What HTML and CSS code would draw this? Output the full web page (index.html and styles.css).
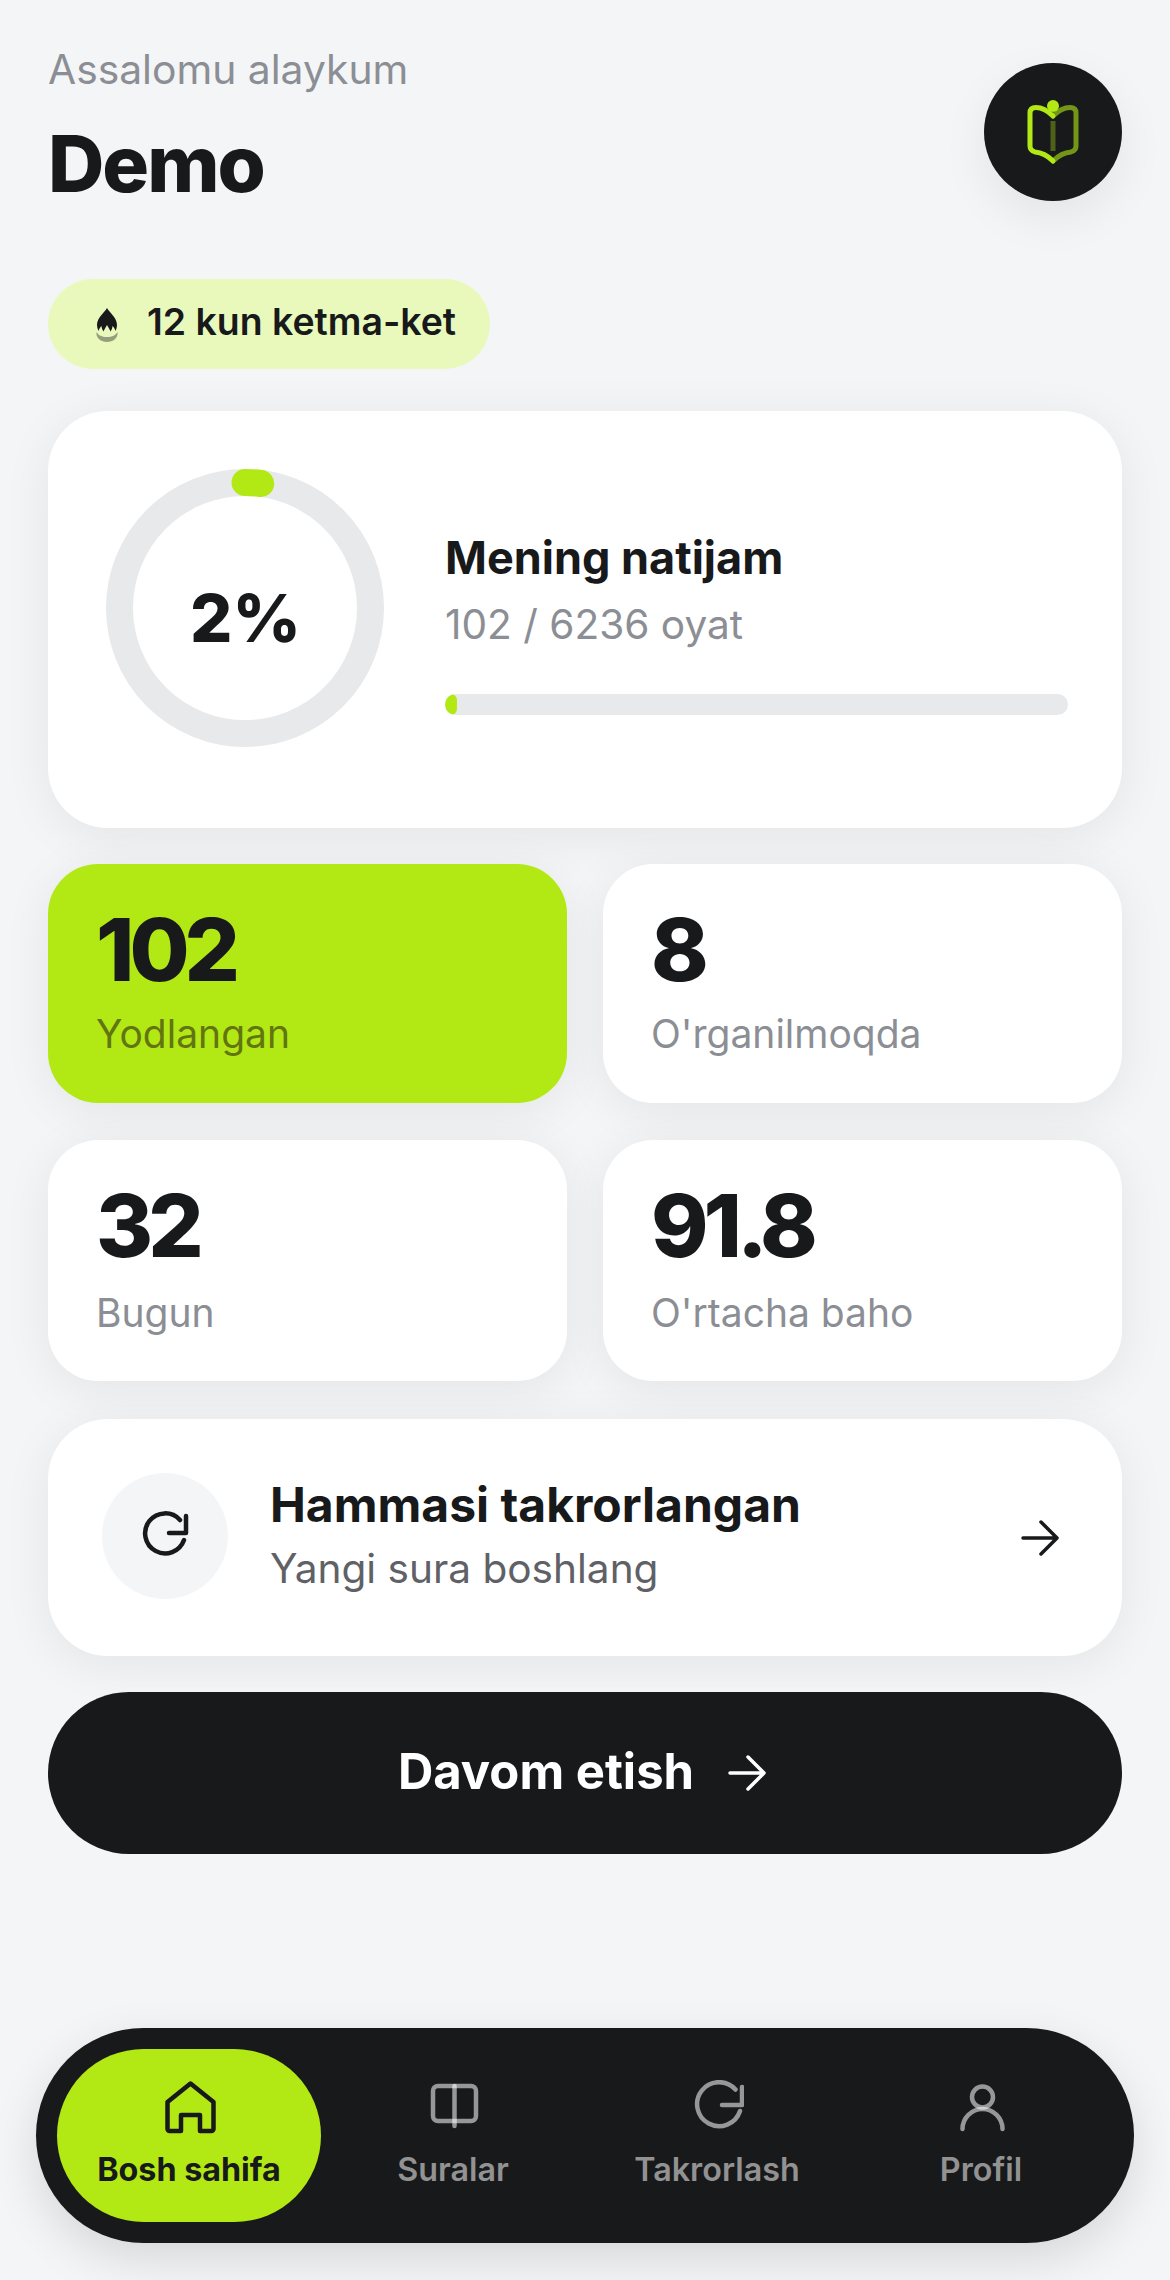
FILE: index.html
```html
<!DOCTYPE html>
<html lang="uz">
<head>
  <meta charset="UTF-8" />
  <title>Bosh sahifa</title>
  <link rel="stylesheet" href="styles.css">
</head>
<body>
  <main class="app">
    <header class="top">
      <div class="hello">
        <p class="hello-small">Assalomu alaykum</p>
        <h1 class="hello-name">Demo</h1>
      </div>
      <div class="logo">
        <svg width="52" height="66" viewBox="0 0 52 66" fill="none" stroke-width="5" stroke-linecap="round" stroke-linejoin="round">
          <path d="M26 52V22" stroke="#b2e915" stroke-opacity=".35" stroke-linecap="butt"/>
          <path d="M26 17C21 12 15 8.500 9 8.500C5 8.500 3 10.500 3 14V47C3 50 5 52 8 53C15 53.500 21 57 26 62" stroke="#b2e915"/>
          <path d="M26 17C31 12 37 8.500 43 8.500C47 8.500 49 10.500 49 14V47C49 50 47 52 44 53C37 53.500 31 57 26 62" stroke="#b2e915" stroke-opacity=".6"/>
          <circle cx="26" cy="7" r="6" fill="#b2e915"/>
        </svg>
      </div>
    </header>

    <div class="streak">
      <svg width="24" height="36" viewBox="0 0 24 36">
        <path d="M12 1C15 6 22 11 22 18C22 20 21.500 22 20.500 24C19.500 21 18.500 20 17.500 19C17.500 21 16.500 23 15.500 24.500C14.500 22 13 20 12 18C11 20 9.500 22 8.500 24.500C7.500 23 6.500 21 6.500 19C5.500 20 4.500 21 3.500 24C2.500 22 2 20 2 18C2 11 9 6 12 1Z" fill="#18191b"/>
        <path d="M1.500 25C3 28 7 30 12 30C17 30 21 28 22.500 25C23.500 31 18 35 12 35C6 35 .5 31 1.500 25Z" fill="#18191b" fill-opacity=".4"/>
      </svg>
      <span class="streak-text">12 kun ketma-ket</span>
    </div>

    <section class="card hero">
      <div class="ring">
        <svg width="278" height="278" viewBox="0 0 278 278" fill="none" stroke-width="27">
          <circle cx="139" cy="139" r="125.500" stroke="#e8e9eb"/>
          <circle cx="139" cy="139" r="125.500" stroke="#b2e915" stroke-linecap="round" stroke-dasharray="15.800 800" transform="rotate(-90 139 139)"/>
        </svg>
        <span class="ring-label">2%</span>
      </div>
      <div class="hero-info">
        <h2 class="hero-title">Mening natijam</h2>
        <p class="hero-sub">102 / 6236 oyat</p>
        <div class="bar"><div class="bar-fill" style="width: 2%"></div></div>
      </div>
    </section>

    <section class="stats">
      <div class="card stat stat-lime">
        <div class="stat-num">102</div>
        <div class="stat-label">Yodlangan</div>
      </div>
      <div class="card stat">
        <div class="stat-num">8</div>
        <div class="stat-label">O'rganilmoqda</div>
      </div>
      <div class="card stat stat-low">
        <div class="stat-num">32</div>
        <div class="stat-label">Bugun</div>
      </div>
      <div class="card stat stat-low">
        <div class="stat-num">91.8</div>
        <div class="stat-label">O'rtacha baho</div>
      </div>
    </section>

    <section class="card review">
      <div class="review-icon">
        <svg width="54" height="54" viewBox="0 0 54 54" fill="none" stroke="#18191b" stroke-width="4.500" stroke-linecap="round" stroke-linejoin="round">
          <path d="M42 14A20 20 0 1 0 46 34"/>
          <path d="M48 10V27H31"/>
        </svg>
      </div>
      <div class="review-text">
        <h3 class="review-title">Hammasi takrorlangan</h3>
        <p class="review-sub">Yangi sura boshlang</p>
      </div>
      <svg class="arrow" width="38" height="38" viewBox="0 0 38 38" fill="none" stroke="#18191b" stroke-width="3.500" stroke-linecap="round" stroke-linejoin="round">
        <path d="M2 19H36M20 3L36 19L20 35"/>
      </svg>
    </section>

    <button class="cta">
      <span>Davom etish</span>
      <svg width="38" height="38" viewBox="0 0 38 38" fill="none" stroke="#fff" stroke-width="3.500" stroke-linecap="round" stroke-linejoin="round">
        <path d="M2 19H36M20 3L36 19L20 35"/>
      </svg>
    </button>

    <nav class="nav">
      <a class="nav-item active">
        <svg width="54" height="54" viewBox="0 0 54 54" fill="none" stroke="#18191b" stroke-width="4.500" stroke-linecap="round" stroke-linejoin="round">
          <path d="M28.500 3.500L5.500 22V49C5.500 50 6.500 51 7.500 51H19V35H38V51H49.500C50.500 51 51.500 50 51.500 49V22Z"/>
        </svg>
        <span>Bosh sahifa</span>
      </a>
      <a class="nav-item">
        <svg width="54" height="54" viewBox="0 0 54 54" fill="none" stroke="#fff" stroke-opacity=".55" stroke-width="4.500" stroke-linecap="round" stroke-linejoin="round">
          <rect x="7" y="6" width="43" height="35" rx="5"/>
          <path d="M28.500 6V46"/>
        </svg>
        <span>Suralar</span>
      </a>
      <a class="nav-item">
        <svg width="54" height="54" viewBox="0 0 54 54" fill="none" stroke="#fff" stroke-opacity=".55" stroke-width="4.500" stroke-linecap="round" stroke-linejoin="round">
          <path d="M45.500 9.500A22 22 0 1 0 50 31"/>
          <path d="M52 7V25H32"/>
        </svg>
        <span>Takrorlash</span>
      </a>
      <a class="nav-item">
        <svg width="54" height="54" viewBox="0 0 54 54" fill="none" stroke="#fff" stroke-opacity=".55" stroke-width="4.500" stroke-linecap="round" stroke-linejoin="round">
          <circle cx="28.500" cy="17" r="10.500"/>
          <path d="M8.500 49C8.500 38 17.500 29 28.500 29C39.500 29 48.500 38 48.500 49"/>
        </svg>
        <span>Profil</span>
      </a>
    </nav>
  </main>
</body>
</html>
```

FILE: styles.css
```css
* {
  box-sizing: border-box;
}

html, body {
  margin: 0;
  height: 100%;
}

body {
  font-family: Inter, "Noto Sans", sans-serif;
  background: #f4f5f7;
  color: #18191b;
}

h1, h2, h3, p {
  margin: 0;
}

.app {
  display: flex;
  flex-direction: column;
  height: 2280px;
  padding: 43px 48px 37px;
}

/* top */
.top {
  display: flex;
  justify-content: space-between;
}

.hello-small {
  margin-top: 3px;
  font-size: 40.800px;
  line-height: 46px;
  color: #8b8e94;
}

.hello-name {
  margin-top: 26px;
  font-size: 78px;
  line-height: 92px;
  font-weight: 800;
  letter-spacing: -2px;
}

.logo {
  display: flex;
  align-items: center;
  justify-content: center;
  width: 138px;
  height: 138px;
  margin-top: 20px;
  border-radius: 50%;
  background: #18191b;
  box-shadow: 0 16px 48px rgba(0, 0, 0, 0.07);
}

.streak {
  display: flex;
  align-items: center;
  gap: 28px;
  align-self: flex-start;
  height: 90px;
  margin-top: 69px;
  padding: 0 34px 0 47px;
  border-radius: 45px;
  background: #e9f9bc;
  font-size: 37.400px;
  font-weight: 600;
}

.streak svg {
  margin-top: 2px;
}

.streak-text {
  margin-bottom: 5px;
}

.card {
  background: #fff;
  box-shadow: 0 8px 48px rgba(0, 0, 0, 0.07);
}

/* hero */
.hero {
  display: flex;
  align-items: center;
  gap: 60px;
  height: 417px;
  margin-top: 42px;
  padding: 0 54px 0 58px;
  border-radius: 60px;
}

.ring {
  position: relative;
  flex: none;
  width: 279px;
  height: 279px;
  margin-bottom: 23px;
}

.ring svg {
  display: block;
}

.ring-label {
  position: absolute;
  inset: 0;
  display: flex;
  align-items: center;
  justify-content: center;
  padding-top: 19px;
  font-size: 66.500px;
  font-weight: 800;
}

.hero-info {
  flex: 1;
  padding-top: 6px;
}

.hero-title {
  font-size: 45px;
  line-height: 54px;
  font-weight: 700;
}

.hero-sub {
  margin-top: 17px;
  font-size: 40.600px;
  line-height: 46px;
  color: #8b8e94;
}

.bar {
  height: 21px;
  margin-top: 46px;
  border-radius: 11px;
  background: #e8e9eb;
  overflow: hidden;
}

.bar-fill {
  height: 100%;
  border-radius: 11px;
  background: #b2e915;
}

/* stats */
.stats {
  display: grid;
  grid-template-columns: 1fr 1fr;
  grid-template-rows: 239px 241px;
  gap: 37px 36px;
  margin-top: 36px;
}

.stat {
  padding: 38px 48px;
  border-radius: 50px;
}

.stat-lime {
  background: #b2e915;
}

.stat-num {
  font-size: 87px;
  line-height: 96px;
  font-weight: 800;
  letter-spacing: -5px;
}

.stat-label {
  margin-top: 13px;
  font-size: 39px;
  line-height: 46px;
  color: #8b8e94;
}

.stat-low .stat-label {
  margin-top: 16px;
}

.stat-lime .stat-label {
  color: #627511;
}

/* review row */
.review {
  display: flex;
  align-items: center;
  height: 237px;
  margin-top: 38px;
  padding: 0 63px 0 54px;
  border-radius: 60px;
}

.review-icon {
  display: flex;
  flex: none;
  align-items: center;
  justify-content: center;
  width: 126px;
  height: 126px;
  margin-bottom: 3px;
  border-radius: 50%;
  background: #f4f5f7;
}

.review-icon svg {
  margin-bottom: 6px;
}

.review-text {
  flex: 1;
  margin: 0 0 6px 42px;
}

.review-title {
  font-size: 48px;
  line-height: 56px;
  font-weight: 700;
}

.review-sub {
  margin-top: 13px;
  font-size: 40.600px;
  line-height: 46px;
  color: #5f6166;
}

/* button */
.cta {
  display: flex;
  align-items: center;
  justify-content: center;
  gap: 34px;
  height: 162px;
  margin-top: 36px;
  padding: 0 6px 4px 0;
  border: none;
  border-radius: 81px;
  background: #18191b;
  color: #fff;
  font-family: inherit;
  font-size: 49px;
  font-weight: 700;
}

.cta svg {
  margin-top: 4px;
}

/* bottom nav */
.nav {
  display: grid;
  grid-template-columns: repeat(4, 1fr);
  height: 215px;
  margin: auto -12px 0;
  padding: 21px;
  border-radius: 108px;
  background: #18191b;
  box-shadow: 0 16px 48px rgba(0, 0, 0, 0.12);
}

.nav-item {
  display: flex;
  flex-direction: column;
  align-items: center;
  gap: 16px;
  padding-top: 31px;
  border-radius: 87px;
  color: #929292;
  font-size: 32.300px;
  line-height: 40px;
  font-weight: 600;
}

.nav-item.active {
  background: #b2e915;
  color: #18191b;
  font-weight: 700;
}
```
